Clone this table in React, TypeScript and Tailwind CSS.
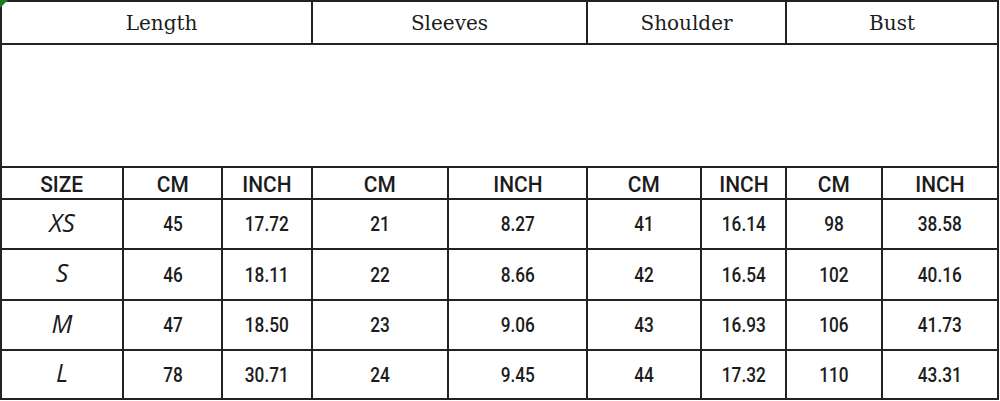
import React from "react";

const rows: [string, string[]][] = [
  ["XS", ["45", "17.72", "21", "8.27", "41", "16.14", "98", "38.58"]],
  ["S", ["46", "18.11", "22", "8.66", "42", "16.54", "102", "40.16"]],
  ["M", ["47", "18.50", "23", "9.06", "43", "16.93", "106", "41.73"]],
  ["L", ["78", "30.71", "24", "9.45", "44", "17.32", "110", "43.31"]],
];

const rowH = ["h-[50px]", "h-[51px]", "h-[50px]", "h-[49px]"];

const cell = "border-r-2 border-b-2 border-[#222] flex items-center justify-center";
const serif = "font-['DejaVu_Serif','Liberation_Serif',serif] text-[20px] h-[43px]";
const sans = "font-['Roboto','Liberation_Sans',sans-serif] font-medium pt-[2px]";
const hand = "font-['Open_Sans','DejaVu_Sans',sans-serif] italic text-[25px]";

export default function App() {
  return (
    <div className="relative w-[1000px] h-[401px] bg-white overflow-hidden">
      <div className="absolute left-0 top-0 w-0 h-0 border-t-[8px] border-r-[8px] border-t-[#1e7a1e] border-r-transparent z-10" />
      <div className="grid grid-cols-[122px_99px_90px_136px_139px_114px_85px_96px_116px] border-l-2 border-t-2 border-[#222] w-[999px] text-[#1c1c1c]">
        <div className={`${cell} ${serif} col-span-3`}>
          <span className="ml-[10px]">Length</span>
        </div>
        <div className={`${cell} ${serif} col-span-2`}>Sleeves</div>
        <div className={`${cell} ${serif} col-span-2`}>Shoulder</div>
        <div className={`${cell} ${serif} col-span-2`}>Bust</div>

        <div className={`${cell} col-span-9 h-[123px]`} />

        {["SIZE", "CM", "INCH", "CM", "INCH", "CM", "INCH", "CM", "INCH"].map((h, i) => (
          <div key={i} className={`${cell} ${sans} h-[32px] text-[22px]`}>
            <span className="inline-block scale-x-[0.95]">{h}</span>
          </div>
        ))}

        {rows.map(([size, vals], r) => (
          <React.Fragment key={size}>
            <div className={`${cell} ${hand} ${rowH[r]}`}>
              <span className="-mt-[3px]">{size}</span>
            </div>
            {vals.map((v, i) => (
              <div key={i} className={`${cell} ${sans} ${rowH[r]} text-[21px]`}>
                <span className="inline-block scale-x-[0.82]">{v}</span>
              </div>
            ))}
          </React.Fragment>
        ))}
      </div>
    </div>
  );
}
